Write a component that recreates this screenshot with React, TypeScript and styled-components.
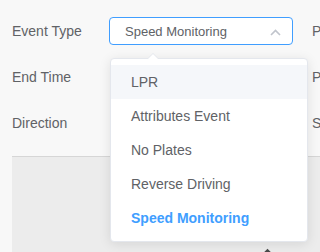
import React from 'react';
import styled, { createGlobalStyle } from 'styled-components';

const GlobalStyle = createGlobalStyle`
  html, body {
    margin: 0;
    padding: 0;
    background: #f8f8f8;
    font-family: "Liberation Sans", Arial, sans-serif;
    overflow: hidden;
  }
`;

const Page = styled.div`
  width: 320px;
  height: 252px;
  position: relative;
  overflow: hidden;
  padding: 17px 0 0 12px;
  box-sizing: border-box;
`;

const Form = styled.div`
  display: flex;
  flex-direction: column;
  gap: 18px;
`;

const Row = styled.div`
  display: flex;
  align-items: center;
  height: 28px;
  white-space: nowrap;
`;

const Label = styled.div<{ $width?: number }>`
  width: ${p => p.$width ?? 97}px;
  flex-shrink: 0;
  font-size: 14px;
  color: #606266;
`;

const SelectWrap = styled.div`
  position: relative;
  width: 184px;
  height: 28px;
  margin-right: 19px;
  flex-shrink: 0;
`;

const SelectBox = styled.div<{ $open?: boolean }>`
  box-sizing: border-box;
  height: 28px;
  border: 1px solid ${p => (p.$open ? '#409eff' : '#dcdfe6')};
  border-radius: 4px;
  background: #fff;
  display: flex;
  align-items: center;
  padding: 0 10px 0 15px;
  font-size: 13px;
  color: #606266;
`;

const SelectText = styled.span`
  flex: 1;
`;

const Arrow = styled.svg`
  width: 11px;
  height: 7px;
  margin-right: 1px;
  margin-top: 2px;
`;

const Spacer = styled.div`
  width: 184px;
  margin-right: 19px;
  flex-shrink: 0;
`;

const Panel = styled.div`
  position: relative;
  margin-top: 19px;
  height: 120px;
  background: #ececec;
  border-top: 1px solid #d6d6d6;
`;

const Marker = styled.div`
  position: absolute;
  left: 250px;
  top: 94px;
  width: 11px;
  height: 11px;
  background: #4a4a4a;
  transform: rotate(45deg);
`;

const Dropdown = styled.div`
  position: absolute;
  left: 1px;
  top: 41px;
  width: 198px;
  box-sizing: border-box;
  background: #fff;
  border: 1px solid #e4e7ed;
  border-radius: 4px;
  box-shadow: 0 2px 12px 0 rgba(0, 0, 0, 0.1);
  padding: 6px 0;
  z-index: 10;
`;

const Caret = styled.div`
  position: absolute;
  top: -6px;
  left: 36px;
  width: 0;
  height: 0;
  border-left: 6px solid transparent;
  border-right: 6px solid transparent;
  border-bottom: 6px solid #e4e7ed;

  &::after {
    content: '';
    position: absolute;
    left: -5px;
    top: 1px;
    border-left: 5px solid transparent;
    border-right: 5px solid transparent;
    border-bottom: 5px solid #fff;
  }
`;

const Item = styled.div<{ $hover?: boolean; $selected?: boolean }>`
  height: 34px;
  line-height: 34px;
  padding: 0 20px;
  font-size: 14px;
  color: ${p => (p.$selected ? '#409eff' : '#606266')};
  font-weight: ${p => (p.$selected ? 700 : 400)};
  background: ${p => (p.$hover ? '#f5f7fa' : 'transparent')};
`;

const options = ['LPR', 'Attributes Event', 'No Plates', 'Reverse Driving', 'Speed Monitoring'];

export default function App() {
  const selected = 'Speed Monitoring';
  return (
    <>
      <GlobalStyle />
      <Page>
        <Form>
          <Row>
            <Label>Event Type</Label>
            <SelectWrap>
              <SelectBox $open>
                <SelectText>{selected}</SelectText>
                <Arrow viewBox="0 0 11 7">
                  <path d="M1 6 L5.5 1.5 L10 6" fill="none" stroke="#c0c4cc" strokeWidth="1.6" />
                </Arrow>
              </SelectBox>
              <Dropdown>
                <Caret />
                {options.map((o, i) => (
                  <Item key={o} $hover={i === 0} $selected={o === selected}>
                    {o}
                  </Item>
                ))}
              </Dropdown>
            </SelectWrap>
            <Label>Plate No.</Label>
          </Row>
          <Row>
            <Label>End Time</Label>
            <Spacer />
            <Label>Plate Color</Label>
          </Row>
          <Row>
            <Label>Direction</Label>
            <Spacer />
            <Label>Speed</Label>
          </Row>
        </Form>
        <Panel>
          <Marker />
        </Panel>
      </Page>
    </>
  );
}
